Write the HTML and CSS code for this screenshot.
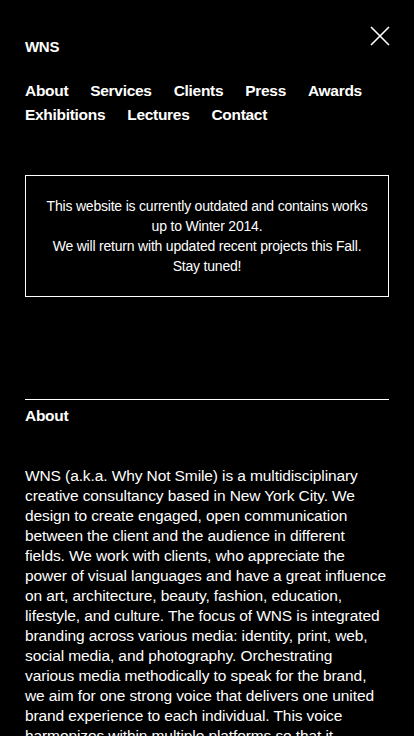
FILE: index.html
```html
<!DOCTYPE html>
<html>
<head>
<meta charset="utf-8">
<link rel="stylesheet" href="styles.css">
</head>
<body>
<header class="top">
  <div class="brand">WNS</div>
  <button class="close" aria-label="Close">
    <svg width="20" height="20" viewBox="0 0 20 20"><path d="M1 1 L19 19 M19 1 L1 19" stroke="#fff" stroke-width="1.6" fill="none"/></svg>
  </button>
</header>
<nav class="nav">
  <a>About</a><a>Services</a><a>Clients</a><a>Press</a><a>Awards</a><a>Exhibitions</a><a>Lectures</a><a>Contact</a>
</nav>
<div class="notice">
  <p>This website is currently outdated and contains works up to Winter 2014.<br>We will return with updated recent projects this Fall.<br>Stay tuned!</p>
</div>
<section class="about">
  <h2>About</h2>
  <p>WNS (a.k.a. Why Not Smile) is a multidisciplinary<br>creative consultancy based in New York City. We<br>design to create engaged, open communication<br>between the client and the audience in different<br>fields. We work with clients, who appreciate the<br>power of visual languages and have a great influence<br>on art, architecture, beauty, fashion, education,<br>lifestyle, and culture. The focus of WNS is integrated<br>branding across various media: identity, print, web,<br>social media, and photography. Orchestrating<br>various media methodically to speak for the brand,<br>we aim for one strong voice that delivers one united<br>brand experience to each individual. This voice<br>harmonizes within multiple platforms so that it<br>resonates with the audience.</p>
</section>
</body>
</html>
```
FILE: styles.css
```css
html, body { margin: 0; padding: 0; background: #000; }
body {
  color: #fff;
  font-family: "Liberation Sans", Arial, sans-serif;
  padding: 0 25px;
  overflow: hidden;
}
.top {
  display: flex;
  justify-content: space-between;
  align-items: flex-start;
  padding-top: 25px;
}
.brand {
  font-weight: bold;
  font-size: 15px;
  line-height: 20px;
  margin-top: 12px;
  letter-spacing: -0.3px;
}
.close {
  background: none;
  border: 0;
  padding: 0;
  margin-top: 1px;
  margin-right: -1px;
  width: 20px;
  height: 20px;
}
.close svg { display: block; }
.nav {
  display: flex;
  flex-wrap: wrap;
  column-gap: 22px;
  margin-top: 22px;
  font-weight: bold;
  font-size: 15.5px;
  line-height: 24px;
  letter-spacing: -0.3px;
}
.notice {
  margin-top: 48px;
  border: 1px solid #fff;
  height: 120px;
  display: flex;
  align-items: center;
  justify-content: center;
  text-align: center;
}
.notice p {
  margin: 0;
  font-size: 14px;
  line-height: 20px;
  padding: 0 18px;
  letter-spacing: -0.2px;
}
.about {
  margin-top: 102px;
  border-top: 1px solid #fff;
}
.about h2 {
  margin: 0;
  font-size: 15.5px;
  line-height: 20px;
  margin-top: 6px;
  letter-spacing: -0.3px;
}
.about p {
  margin: 40px 0 0;
  font-size: 15.5px;
  line-height: 20px;
  letter-spacing: -0.1px;
  white-space: nowrap;
}
```
